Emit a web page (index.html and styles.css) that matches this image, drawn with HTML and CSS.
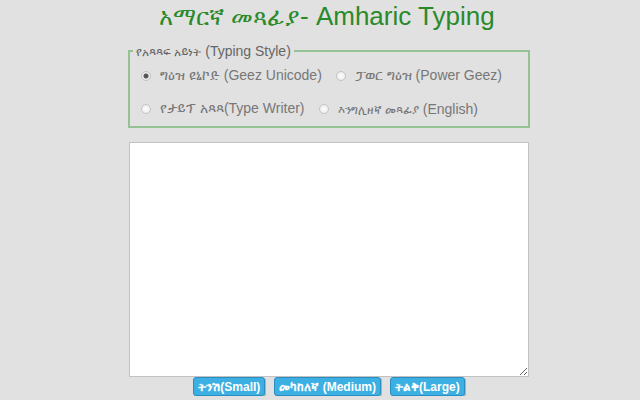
FILE: index.html
```html
<!DOCTYPE html>
<html lang="am">
<head>
    <meta charset="UTF-8">
    <title>አማርኛ መጻፊያ- Amharic Typing</title>
    <link rel="stylesheet" href="styles.css">
</head>
<body>
    <div class="container">
        <h1 class="title"><span class="geez">አማርኛ መጻፊያ</span>- Amharic Typing</h1>
        <fieldset class="style-box">
            <legend><span class="geez">የአጻጻፍ አይነት</span> (Typing Style)</legend>
            <div class="opt-row">
                <label class="opt"><input type="radio" name="mode" checked> <span>ግዕዝ ዩኒኮድ (Geez Unicode)</span></label>
                <label class="opt"><input type="radio" name="mode"> <span>ፓወር ግዕዝ (Power Geez)</span></label>
            </div>
            <div class="opt-row">
                <label class="opt"><input type="radio" name="mode"> <span>የታይፕ አጻጻ(Type Writer)</span></label>
                <label class="opt"><input type="radio" name="mode"> <span><span class="geez">እንግሊዘኛ መጻፊያ</span> (English)</span></label>
            </div>
        </fieldset>
        <textarea class="editor"></textarea>
        <div class="sizes">
            <button type="button" class="size-btn">ትንሽ(Small)</button>
            <button type="button" class="size-btn">መካከለኛ (Medium)</button>
            <button type="button" class="size-btn">ትልቅ(Large)</button>
        </div>
    </div>
</body>
</html>
```
FILE: styles.css
```css
* { margin: 0; padding: 0; box-sizing: border-box; }
body {
    font-family: 'Liberation Sans', Arial, sans-serif;
    background: #e1e1e1;
    overflow: hidden;
}
.container {
    width: 402px;
    margin-left: 128px;
    display: flex;
    flex-direction: column;
    align-items: center;
}
.title {
    font-size: 26px;
    font-weight: normal;
    color: #2a8a2a;
    line-height: 30px;
    margin-top: 1px;
    margin-right: 4px;
    white-space: nowrap;
}
.title .geez { font-size: 24px; }
.style-box {
    width: 402px;
    height: 85px;
    margin-top: 11px;
    border: 2px solid #95c195;
    padding: 8px 0 0 11px;
    display: flex;
    flex-direction: column;
    gap: 16px;
}
.style-box legend {
    font-size: 14px;
    color: #666;
    padding: 0 3px;
    margin-left: -8px;
}
.style-box legend .geez { font-size: 12px; }
.opt-row {
    display: flex;
    gap: 14px;
}
.opt {
    font-size: 14px;
    color: #777;
    display: flex;
    align-items: center;
    gap: 9px;
    height: 17px;
    white-space: nowrap;
}
.opt .geez { font-size: 12px; }
.opt input {
    appearance: none;
    width: 10px;
    height: 10px;
    margin: 0;
    border: 1px solid #c4c4c4;
    border-radius: 50%;
    background: radial-gradient(circle, #fdfdfd 0%, #e8e8e8 100%);
    flex: none;
}
.opt input:checked {
    background: radial-gradient(circle, #555 0 2px, #eee 3px, #e4e4e4 100%);
}
.editor {
    width: 400px;
    height: 235px;
    margin-top: 14px;
    border: 1px solid #c2c2c2;
    background: #fff;
    resize: vertical;
}
.sizes {
    display: flex;
    gap: 9px;
}
.size-btn {
    background: #3cb0e2;
    color: #fff;
    font-family: 'Liberation Sans', Arial, sans-serif;
    font-weight: bold;
    font-size: 12px;
    height: 19px;
    padding: 0 4px;
    border: 1px solid #2a8fc0;
    border-radius: 3px;
    box-shadow: 1px 1px 0 #9bb;
}
```
